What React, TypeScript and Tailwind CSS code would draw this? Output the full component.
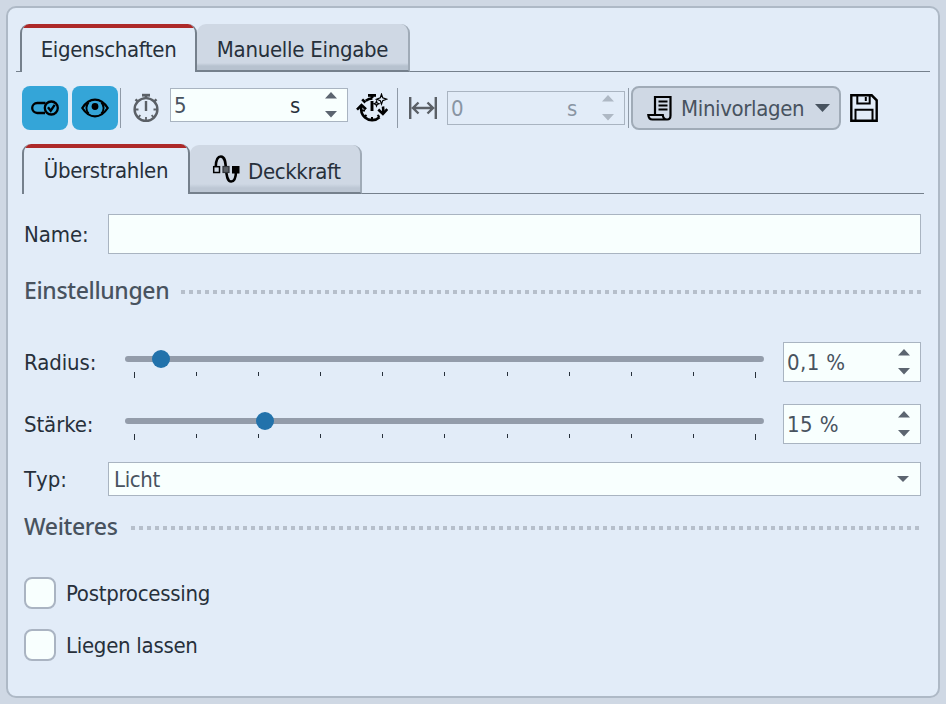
import React, { useState } from 'react';

const TICKS = [0, 1, 2, 3, 4, 5, 6, 7, 8, 9, 10];

const ToggleIcon = () => (
  <svg width="28" height="16" viewBox="0 0 28 16" fill="none" stroke="#000" strokeWidth="2.3">
    <path d="M14 13H6.200a5 5 0 0 1 0-10H14.500" />
    <circle cx="20.300" cy="8" r="6.500" />
    <path d="M17 7.300l2.700 3.400 4-5.900" />
  </svg>
);

const EyeIcon = () => (
  <svg width="28" height="20" viewBox="0 0 28 20" fill="none" stroke="#000" strokeWidth="2.3">
    <path d="M1.300 10C4.800 4.500 9 1.600 14 1.600S23.200 4.500 26.700 10C23.200 15.500 19 18.400 14 18.400S4.800 15.500 1.300 10z" />
    <path d="M7.600 4.500a8 8 0 0 0 0 11M20.400 4.500a8 8 0 0 1 0 11" strokeWidth="1.900" />
    <circle cx="14" cy="8.500" r="3.400" fill="#000" stroke="none" />
  </svg>
);

const StopwatchIcon = () => (
  <svg width="28" height="30" viewBox="0 0 28 30" fill="none" stroke="#5b6066" strokeWidth="2.400">
    <circle cx="14" cy="16.500" r="11.400" />
    <path d="M10 2.200h8" strokeWidth="2.800" />
    <path d="M14 2v4M14 8v10M3.500 6.300l3 2.800M24.500 6.300l-3 2.800" />
    <path d="M3 16.500h3.500M21.500 16.500H25M14 24v3.500M6.200 24.300l2.200-2.200M21.800 24.300l-2.200-2.200" strokeWidth="1.800" />
  </svg>
);

const AutoTimeIcon = () => (
  <svg width="32" height="30" viewBox="0 0 32 30" fill="none" stroke="#000" strokeWidth="2.600">
    <path d="M12 2.400h8" strokeWidth="2.800" />
    <path d="M16 2v3M16 8v10" strokeWidth="2.900" />
    <path d="M16.500 5.500c-2.700 0-4.700.700-6.700 2.200M6.200 6.300l3.200 3.200" />
    <path d="M5.300 13c-.900 5 .500 8.700 3.700 11.500 4.200 3.700 10.500 3.400 14.500-.300M26.900 20.500c.500-2 .500-4.500.100-7" />
    <path d="M1 16.700l4.500-4.700 4.500 4.300M22.300 16.500l4.600 4.400 4.400-4.900" />
    <path d="M16 24v3.500M8.500 24l2-2M23.500 24l-2-2M6 17.500h3" strokeWidth="2" />
    <path d="M25.500 1.200l1.200 3.600 3.800 1.400-3.800 1.400-1.200 3.600-1.200-3.600-3.800-1.400 3.800-1.400zM20.500 8.200l.700 1.800 1.800.700-1.800.700-.700 1.800-.700-1.800-1.800-.700 1.800-.700z" strokeWidth="1.200" />
  </svg>
);

const WidthIcon = () => (
  <svg width="28" height="24" viewBox="0 0 28 24" fill="none" stroke="#5b6066" strokeWidth="2.400">
    <path d="M1.200 1v22M26.800 1v22M4 12h20M9.500 6.500L4 12l5.500 5.500M18.500 6.500L24 12l-5.500 5.500" />
  </svg>
);

const ScrollIcon = () => (
  <svg width="26" height="26" viewBox="0 0 26 26" fill="none" stroke="#000" strokeWidth="2.200">
    <path d="M8 19V2h15.500v18.500c0 2.500-1.300 4-3.300 4H5.500C3 24.500 1.500 23 1.300 20h14.500c.200 3 1.600 4.500 4.200 4.500" />
    <path d="M11.500 6.500h9M11.500 10.500h9M11.500 14.500h9" strokeWidth="2" />
  </svg>
);

const SaveIcon = () => (
  <svg width="28" height="28" viewBox="0 0 28 28" fill="none" stroke="#000" strokeWidth="2.400">
    <path d="M1.300 1.300h20.400l5 5v20.400H1.300z" />
    <path d="M7.300 1.500v8h12.400v-8M5.500 26.500v-10.700h17v10.700" strokeWidth="2" />
    <path d="M15.800 3v4" strokeWidth="2" />
  </svg>
);

const CurveIcon = () => (
  <svg width="28" height="28" viewBox="0 0 28 28" fill="none" stroke="#000">
    <path d="M3.800 11.500C4 4.800 5.600 1.500 8.800 1.500c4.200 0 4.700 5.500 5.200 12.500s1.400 12.500 5.200 12.500c3.400 0 4.700-4.200 4.800-10.500" strokeWidth="2.600" />
    <rect x="1.700" y="11.700" width="5.800" height="5.800" fill="#cfd8e4" strokeWidth="1.500" />
    <rect x="11" y="11.500" width="6" height="6" fill="#5b6066" stroke="#30343a" strokeWidth="1.200" />
    <rect x="20" y="11" width="7.500" height="7.500" fill="#000" stroke="none" />
  </svg>
);

const SpinArrows: React.FC<{ className?: string }> = ({ className = 'text-[#5c6570]' }) => (
  <svg width="12" height="26" viewBox="0 0 12 26" fill="currentColor" className={className}>
    <path d="M0 6.500L6 0l6 6.500zM0 19h12l-6 6.500z" />
  </svg>
);

const Separator = () => <div className="h-10 w-px shrink-0 bg-[#8f9aa7]" />;

const SectionHeading: React.FC<{ title: string; width: string }> = ({ title, width }) => (
  <div className="flex h-10 items-center pr-[17px] pl-4">
    <h2 className={`mb-0.5 shrink-0 font-['Noto_Sans'] text-[23px] leading-[38px] font-medium tracking-[-0.35px] whitespace-nowrap text-[#48535f] ${width}`}>{title}</h2>
    <div className="mt-[2px] h-1 flex-1 bg-[repeating-linear-gradient(90deg,#b6bfcb_0_4px,transparent_4px_8px)]" />
  </div>
);

const SliderRow: React.FC<{ label: string; value: string; left: number }> = ({ label, value, left }) => (
  <div className="flex h-10 pr-[17px] pl-4">
    <span className="w-[101px] leading-[41px] tracking-[-0.1px]">{label}</span>
    <div className="w-[639px] pt-[14px]">
      <div className="relative h-1.5 rounded-full bg-[#939caa]">
        <div className="absolute -top-[5.75px] size-[17.5px] rounded-full bg-[#2272ab]" style={{ left }} />
      </div>
      <div className="mt-[10px] flex justify-between pr-2 pl-[9px]">
        {TICKS.map((tick) => (
          <div key={tick} className={`w-px bg-[#27303b] ${tick === 0 || tick === 10 ? 'h-1.5' : 'h-1'}`} />
        ))}
      </div>
    </div>
    <div className="ml-[19px] flex w-[138px] items-center justify-between border border-[#a9b4c1] bg-[#f8fffe] pr-[10px] pl-[3px] text-[#48535f]">
      <span className="mt-px tracking-[0.4px]">{value}</span>
      <SpinArrows />
    </div>
  </div>
);

const CheckRow: React.FC<{ label: string }> = ({ label }) => {
  const [checked, setChecked] = useState(false);
  return (
    <label className="flex h-8 items-center gap-[10px] pl-4">
      <input
        type="checkbox"
        checked={checked}
        onChange={() => setChecked(!checked)}
        className="size-8 appearance-none rounded-[8px] border-2 border-[#aab4c2] bg-[#f8fffe] checked:bg-[#34a5d8]"
      />
      <span className="mt-px tracking-[-0.28px]">{label}</span>
    </label>
  );
};

const App: React.FC = () => {
  return (
    <div className="h-[704px] w-[946px] bg-[#cfd8e4] p-1.5 font-['DejaVu_Sans_Condensed','DejaVu_Sans',sans-serif] text-[22px] leading-8 tracking-[-0.35px] text-[#27303b]">
      <main className="h-[692px] w-[934px] rounded-[10px] border-2 border-[#aeb9c6] bg-[#e2ecf8] pt-4">
        {/* Main tabs */}
        <div className="flex h-12 pr-2 pl-2">
          <div className="mt-[47px] h-px w-1 bg-[#75808c]" />
          <div className="relative w-[177px] overflow-hidden rounded-t-[9px] border-x-2 border-[#75808c] text-center leading-[52px]">
            <div className="absolute -inset-x-0.5 top-0 h-1 bg-[#ad2929]" />
            Eigenschaften
          </div>
          <div className="w-[213px] rounded-t-[9px] border-r-2 border-b-2 border-r-[#a0abb7] border-b-[#75808c] bg-[linear-gradient(#cfd8e4_39px,#b7c2cf_42px)] text-center leading-[52px] tracking-[-0.28px]">
            Manuelle Eingabe
          </div>
          <div className="mt-[47px] h-px flex-1 bg-[#75808c]" />
        </div>

        {/* Toolbar */}
        <div className="mt-[14px] flex h-11 items-center pl-[14px]">
          <button className="flex h-11 w-[46px] shrink-0 items-center justify-center rounded-[8px] bg-[#34a5d8]"><ToggleIcon /></button>
          <button className="ml-1 mr-[2px] flex h-11 w-[46px] shrink-0 items-center justify-center rounded-[8px] bg-[#34a5d8]"><EyeIcon /></button>
          <Separator />
          <div className="mr-[10px] ml-[11px] shrink-0"><StopwatchIcon /></div>
          <div className="mb-[6px] flex h-[34px] w-[178px] shrink-0 items-center border border-[#a9b4c1] bg-[#f8fffe] pr-[10px] pl-[3px] text-[#48535f]">
            <span className="mt-0.5 flex-1">5</span>
            <span className="mt-px mr-[25px] text-[#27303b]">s</span>
            <SpinArrows />
          </div>
          <div className="mr-[9px] ml-2 shrink-0"><AutoTimeIcon /></div>
          <Separator />
          <div className="mr-[10px] ml-[11px] shrink-0"><WidthIcon /></div>
          <div className="flex h-[34px] w-[178px] shrink-0 items-center border border-[#a9b4c1] pr-[10px] pl-[3px] text-[#8995a3]">
            <span className="mt-px flex-1">0</span>
            <span className="mt-px mr-[25px]">s</span>
            <SpinArrows className="text-[#aeb8c4]" />
          </div>
          <div className="mr-[2px] ml-[3px]"><Separator /></div>
          <button className="flex h-11 w-[210px] shrink-0 items-center rounded-[8px] border-2 border-[#a0abb7] bg-[#cfd8e4] pl-[14px] text-[#48535f]">
            <ScrollIcon />
            <span className="mt-px ml-2 w-[134px] text-left tracking-[-0.35px]">Minivorlagen</span>
            <svg width="15" height="8" viewBox="0 0 15 8" fill="#48535f"><path d="M0 0h15L7.500 8z" /></svg>
          </button>
          <button className="ml-[9px] shrink-0"><SaveIcon /></button>
        </div>

        {/* Effect tabs */}
        <div className="mt-[14px] flex h-[50px] pr-[14px] pl-[14px]">
          <div className="relative w-[168px] overflow-hidden rounded-t-[9px] border-x-2 border-[#75808c] text-center leading-[54px]">
            <div className="absolute -inset-x-0.5 top-0 h-1 bg-[#ad2929]" />
            Überstrahlen
          </div>
          <div className="mt-px flex h-[49px] w-[172px] items-center rounded-t-[9px] border-r-2 border-b-2 border-r-[#a0abb7] border-b-[#75808c] bg-[linear-gradient(#cfd8e4_39px,#bdc7d4_43px)] pl-[22px]">
            <CurveIcon />
            <span className="mt-[6px] ml-2">Deckkraft</span>
          </div>
          <div className="mt-[49px] h-px flex-1 bg-[#75808c]" />
        </div>

        <div className="mt-5 flex h-10 pr-[17px] pl-4">
          <span className="w-[84px] leading-[41px] tracking-[-0.1px]">Name:</span>
          <input className="h-10 flex-1 border border-[#a9b4c1] bg-[#f8fffe] px-1 outline-none" />
        </div>

        <div className="mt-[17px]">
          <SectionHeading title="Einstellungen" width="w-[157px]" />
        </div>
        <div className="mt-[31px] flex flex-col gap-[22px]">
          <SliderRow label="Radius:" value="0,1 %" left={27.25} />
          <SliderRow label="Stärke:" value="15 %" left={131.25} />
        </div>
        <div className="mt-[18px] flex h-[34px] pr-[17px] pl-4">
          <span className="w-[84px] leading-[35px] tracking-normal [font-kerning:none]">Typ:</span>
          <div className="flex flex-1 items-center justify-between border border-[#a9b4c1] bg-[#f8fffe] pr-[11px] pl-[5px] text-[#48535f]">
            <span className="mt-0.5">Licht</span>
            <svg width="12" height="6" viewBox="0 0 12 6" fill="#5c6570"><path d="M0 0h12L6 6z" /></svg>
          </div>
        </div>

        <div className="mt-[11px]">
          <SectionHeading title="Weiteres" width="w-[107px]" />
        </div>
        <div className="mt-[30px] flex flex-col gap-5">
          <CheckRow label="Postprocessing" />
          <CheckRow label="Liegen lassen" />
        </div>
      </main>
    </div>
  );
};

export default App;
